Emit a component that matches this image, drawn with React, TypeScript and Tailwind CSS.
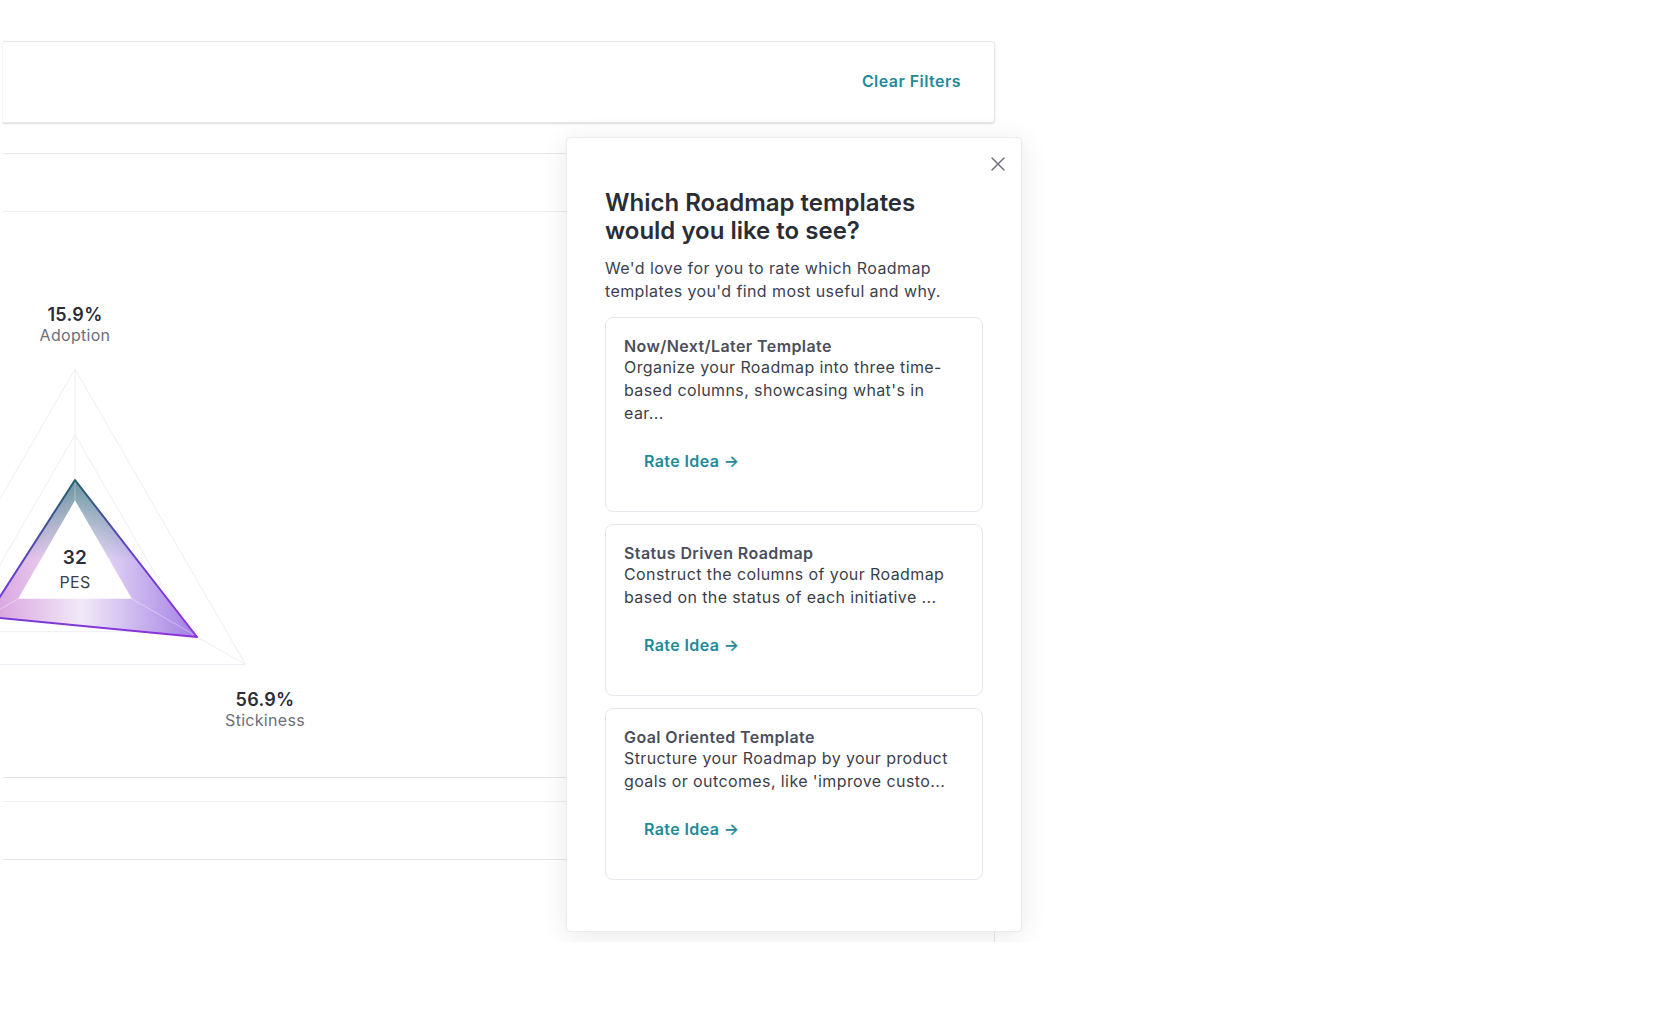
import { X } from 'lucide-react';

const cards = [
  {
    title: 'Now/Next/Later Template',
    body: "Organize your Roadmap into three time-based columns, showcasing what's in ear...",
  },
  {
    title: 'Status Driven Roadmap',
    body: 'Construct the columns of your Roadmap based on the status of each initiative ...',
  },
  {
    title: 'Goal Oriented Template',
    body: "Structure your Roadmap by your product goals or outcomes, like 'improve custo...",
  },
];

const PesChart = () => (
  <svg
    className="absolute left-[-3px] top-0 w-[330px] h-[565px] overflow-visible"
    viewBox="0 212 330 565"
  >
    <defs>
      <linearGradient id="fillH" gradientUnits="userSpaceOnUse" x1="-13" y1="0" x2="197" y2="0">
        <stop offset="0" stopColor="#d79ddc" />
        <stop offset="0.45" stopColor="#f1e9f8" />
        <stop offset="1" stopColor="#a27fe4" />
      </linearGradient>
      <linearGradient id="fillV" gradientUnits="userSpaceOnUse" x1="0" y1="480" x2="0" y2="580">
        <stop offset="0" stopColor="#3a7683" stopOpacity="0.75" />
        <stop offset="0.8" stopColor="#3a7683" stopOpacity="0" />
      </linearGradient>
      <linearGradient id="strokeG" gradientUnits="userSpaceOnUse" x1="75" y1="480" x2="110" y2="640">
        <stop offset="0" stopColor="#235f6e" />
        <stop offset="0.55" stopColor="#6b3fd2" />
        <stop offset="1" stopColor="#8a34d8" />
      </linearGradient>
    </defs>
    <g fill="none" stroke="#eceef3" strokeWidth="1">
      <polygon points="75,369 245.6,664.5 -95.6,664.5" />
      <polygon points="75,434.7 188.7,631.7 -38.7,631.7" />
    </g>
    <polygon points="75,480 197,637 -12.9,616.7" fill="url(#fillH)" />
    <polygon points="75,480 197,637 -12.9,616.7" fill="url(#fillV)" />
    <g stroke="#ffffff" strokeOpacity="0.35" strokeWidth="1">
      <line x1="75" y1="566" x2="75" y2="369" />
      <line x1="75" y1="566" x2="245.6" y2="664.5" />
      <line x1="75" y1="566" x2="-95.6" y2="664.5" />
    </g>
    <g stroke="#eceef3" strokeWidth="1">
      <line x1="75" y1="369" x2="75" y2="480" />
      <line x1="197" y1="637" x2="245.6" y2="664.5" />
    </g>
    <polygon points="75,500.3 131.9,598.8 18.1,598.8" fill="#ffffff" />
    <polygon
      points="75,480 197,637 -12.9,616.7"
      fill="none"
      stroke="url(#strokeG)"
      strokeWidth="2"
      strokeLinejoin="round"
    />
  </svg>
);

const TemplateCard = ({ title, body }: { title: string; body: string }) => (
  <div className="border border-[#e6e7ec] rounded-[8px] pt-[18px] pl-[18px] pr-[26px] pb-[30px] tracking-[0.4px]">
    <div className="text-[16px] leading-[20px] font-semibold text-[#4b4f5b]">{title}</div>
    <div className="text-[16px] leading-[23px] text-[#3b3f4a]">{body}</div>
    <button className="mt-4 px-5 py-2 text-[16px] leading-[24px] font-semibold text-[#1f8a99] tracking-[0.4px]">
      Rate Idea →
    </button>
  </div>
);

export default function App() {
  return (
    <div className="w-full h-[1027px] bg-white font-['Inter',sans-serif]">
      <div className="relative h-[942px] overflow-hidden pl-[3px] pt-[41px]">
        <div className="w-[992px]">
          <div className="h-[82px] border border-l-0 border-[#e6e7eb] rounded-r-[4px] shadow-[0_1px_2px_rgba(0,0,0,0.14)] flex items-center justify-end pr-[33px]">
            <span className="text-[16px] font-semibold text-[#1f8a99] tracking-[0.45px] -mt-[2px]">Clear Filters</span>
          </div>

          <div className="mt-[30px] border-t border-r border-[#e7e8ec] h-[789px]">
            <div className="h-[58px] border-b border-[#eceef1]" />
            <div className="relative h-[566px] border-b border-[#e3e4e9]">
              <PesChart />
              <div className="absolute left-[22px] top-[93px] w-[100px] flex flex-col items-center tracking-[0.3px]">
                <span className="text-[18px] leading-[20px] font-semibold text-[#2b2e37]">15.9%</span>
                <span className="text-[16px] leading-[20px] text-[#6b6f7c]">Adoption</span>
              </div>
              <div className="absolute left-[22px] top-[334px] w-[100px] flex flex-col items-center tracking-[0.3px]">
                <span className="text-[19px] leading-[24px] font-semibold text-[#2b2e37]">32</span>
                <span className="text-[16px] leading-[24px] text-[#3b3f4a]">PES</span>
              </div>
              <div className="absolute left-[212px] top-[478px] w-[100px] flex flex-col items-center tracking-[0.3px]">
                <span className="text-[18px] leading-[20px] font-semibold text-[#2b2e37]">56.9%</span>
                <span className="text-[16px] leading-[20px] text-[#6b6f7c]">Stickiness</span>
              </div>
            </div>
            <div className="h-[24px] border-b border-[#eff0f3]" />
            <div className="h-[58px] border-b border-[#e7e8ec]" />
          </div>
        </div>

        <div className="absolute left-[566px] top-[137px] w-[456px] h-[795px] bg-white border border-[#ececf0] rounded-[4px] shadow-[0_4px_28px_rgba(0,0,0,0.09)] px-[38px] pt-[51px]">
          <button className="absolute top-[14px] right-[11px] text-[#6b6f7a]">
            <X size={24} strokeWidth={1.4} />
          </button>
          <h2 className="max-w-[340px] text-[24px] leading-[28px] font-semibold text-[#2a2d36]">
            Which Roadmap templates would you like to see?
          </h2>
          <p className="mt-[12px] text-[16px] leading-[23px] text-[#3d4150] tracking-[0.4px]">
            We'd love for you to rate which Roadmap templates you'd find most useful and why.
          </p>
          <div className="mt-[14px] flex flex-col gap-3">
            {cards.map((c) => (
              <TemplateCard key={c.title} title={c.title} body={c.body} />
            ))}
          </div>
        </div>
      </div>
    </div>
  );
}
